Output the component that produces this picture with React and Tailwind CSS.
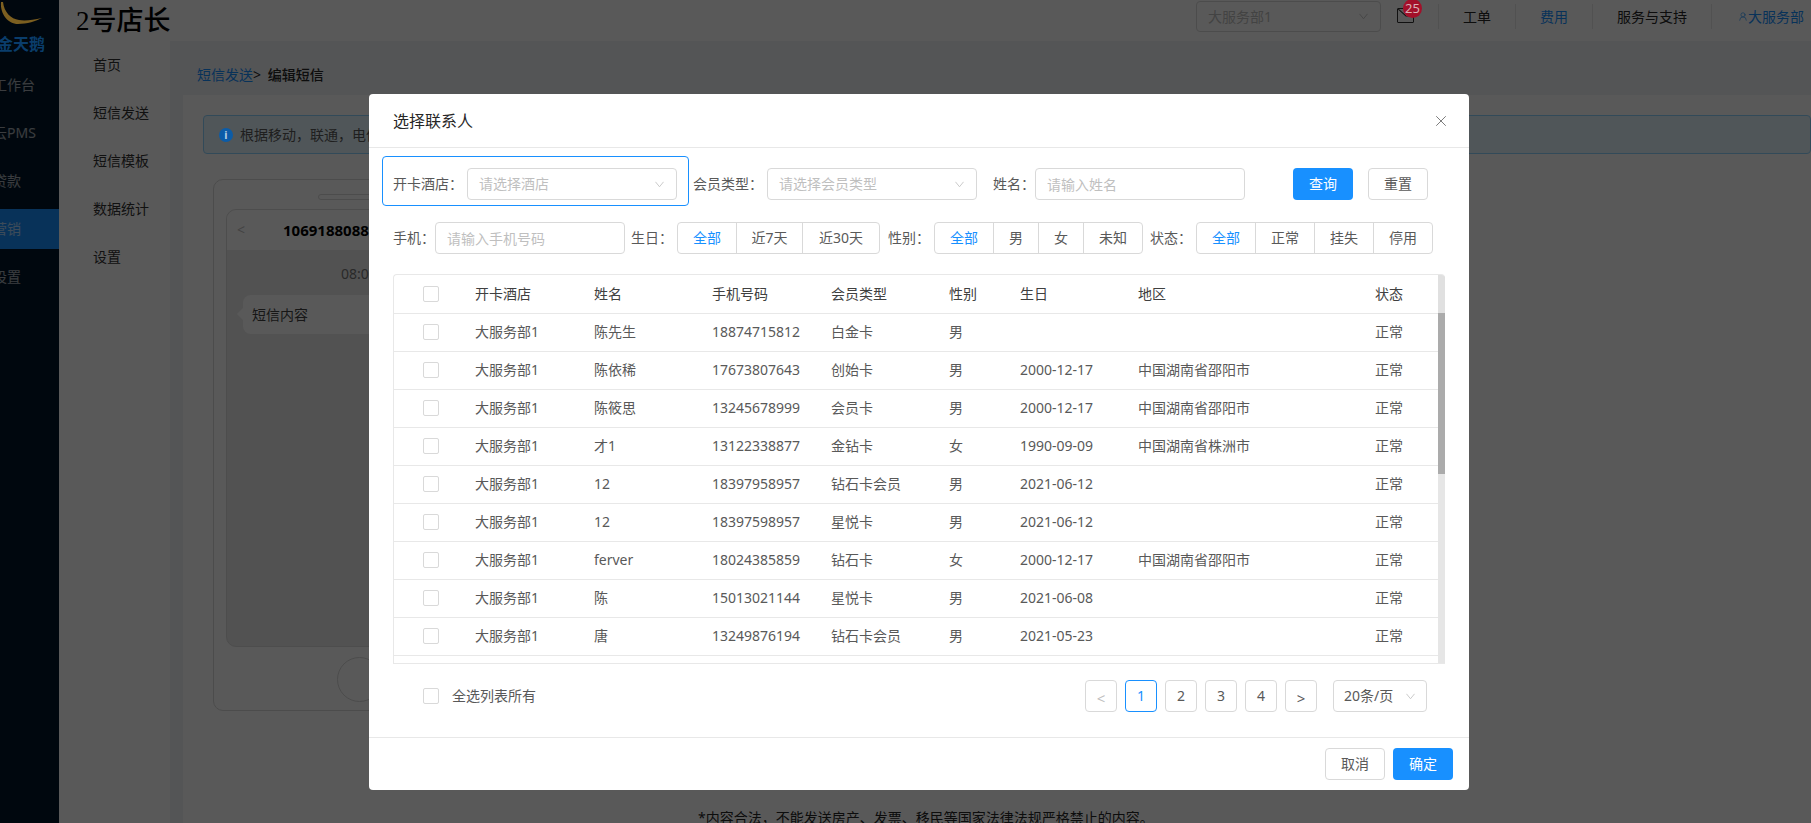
import React from "react";
import { X, UserRound } from "lucide-react";

const sideItems = ["工作台", "云PMS", "贷款", "营销", "设置"];
const subItems = ["首页", "短信发送", "短信模板", "数据统计", "设置"];

const rows = [
  ["大服务部1", "陈先生", "18874715812", "白金卡", "男", "", "", "正常"],
  ["大服务部1", "陈依稀", "17673807643", "创始卡", "男", "2000-12-17", "中国湖南省邵阳市", "正常"],
  ["大服务部1", "陈筱思", "13245678999", "会员卡", "男", "2000-12-17", "中国湖南省邵阳市", "正常"],
  ["大服务部1", "才1", "13122338877", "金钻卡", "女", "1990-09-09", "中国湖南省株洲市", "正常"],
  ["大服务部1", "12", "18397958957", "钻石卡会员", "男", "2021-06-12", "", "正常"],
  ["大服务部1", "12", "18397598957", "星悦卡", "男", "2021-06-12", "", "正常"],
  ["大服务部1", "ferver", "18024385859", "钻石卡", "女", "2000-12-17", "中国湖南省邵阳市", "正常"],
  ["大服务部1", "陈", "15013021144", "星悦卡", "男", "2021-06-08", "", "正常"],
  ["大服务部1", "唐", "13249876194", "钻石卡会员", "男", "2021-05-23", "", "正常"],
];

const Chevron = ({ className }) => (
  <svg viewBox="0 0 10 7" className={className} fill="none" stroke="currentColor" strokeWidth="0.9">
    <path d="M0.5 0.5 L5 6 L9.5 0.5" />
  </svg>
);

const Checkbox = () => (
  <div className="w-4 h-4 shrink-0 bg-white border border-[#d9d9d9] rounded-[2px]" />
);

const FakeSelect = ({ text, placeholder, className }) => (
  <div className={`h-8 flex items-center justify-between pl-[11px] pr-3 bg-white border border-[#d9d9d9] rounded ${className}`}>
    <span className={placeholder ? "text-[#bfbfbf]" : "text-[#595959]"}>{text}</span>
    <Chevron className="w-[9px] h-[7px] text-[#bfbfbf]" />
  </div>
);

const TextInput = ({ placeholder, className }) => (
  <input
    readOnly
    placeholder={placeholder}
    className={`h-8 pl-[11px] pr-3 bg-white border border-[#d9d9d9] rounded outline-none placeholder:text-[#bfbfbf] ${className}`}
  />
);

const RadioGroup = ({ items }) => (
  <div className="flex h-8">
    {items.map(([label, width], i) => (
      <div
        key={label}
        style={{ width }}
        className={`flex items-center justify-center border border-[#d9d9d9] -ml-px first:ml-0 first:rounded-l last:rounded-r ${
          i === 0 ? "relative z-10 border-[#1890ff] text-[#1890ff]" : "text-[#595959]"
        }`}
      >
        {label}
      </div>
    ))}
  </div>
);

const PageBtn = ({ children, active, className }) => (
  <div
    className={`w-8 h-8 flex items-center justify-center border rounded ${
      active ? "border-[#1890ff] text-[#1890ff]" : "border-[#d9d9d9] text-[#595959]"
    } ${className || ""}`}
  >
    {children}
  </div>
);

const FormLabel = ({ children, className }) => (
  <span className={`h-8 leading-8 shrink-0 ${className}`}>{children}</span>
);

const ContactModal = () => (
  <div className="w-[1100px] h-[696px] bg-white rounded flex flex-col text-sm leading-[22px] text-[#595959]">
    <div className="h-[54px] shrink-0 flex items-center justify-between pl-6 pr-[19px] border-b border-[#e8e8e8]">
      <span className="text-base text-[#262626]">选择联系人</span>
      <X className="w-[18px] h-[18px] text-[#737373]" strokeWidth={1.25} />
    </div>

    {/* filters */}
    <div className="flex items-start mt-2 ml-[13px]">
      <div className="w-[307px] h-[50px] flex items-start pt-[11px] pl-[10px] border border-[#1890ff] rounded">
        <FormLabel className="w-[74px]">开卡酒店：</FormLabel>
        <FakeSelect text="请选择酒店" placeholder className="w-[210px]" />
      </div>
      <div className="flex items-center mt-3">
        <FormLabel className="w-[74px] ml-1">会员类型：</FormLabel>
        <FakeSelect text="请选择会员类型" placeholder className="w-[210px]" />
        <FormLabel className="w-[42px] ml-4">姓名：</FormLabel>
        <TextInput placeholder="请输入姓名" className="w-[210px]" />
        <div className="w-[60px] h-8 ml-[48px] flex items-center justify-center rounded bg-[#1890ff] text-white">查询</div>
        <div className="w-[60px] h-8 ml-[15px] flex items-center justify-center rounded border border-[#d9d9d9]">重置</div>
      </div>
    </div>
    <div className="flex items-center mt-4 ml-6">
      <FormLabel className="w-[42px]">手机：</FormLabel>
      <TextInput placeholder="请输入手机号码" className="w-[190px]" />
      <FormLabel className="w-[46px] ml-[6px]">生日：</FormLabel>
      <RadioGroup items={[["全部", 60], ["近7天", 67], ["近30天", 78]]} />
      <FormLabel className="w-[46px] ml-2">性别：</FormLabel>
      <RadioGroup items={[["全部", 60], ["男", 46], ["女", 46], ["未知", 60]]} />
      <FormLabel className="w-[46px] ml-[7px]">状态：</FormLabel>
      <RadioGroup items={[["全部", 60], ["正常", 60], ["挂失", 60], ["停用", 60]]} />
    </div>

    {/* table */}
    <div className="flex w-[1052px] h-[390px] mt-5 ml-6 border-t border-b border-l border-[#e8e8e8] rounded-t overflow-hidden">
      <table className="w-[1044px] h-fit table-fixed border-collapse shrink-0">
        <colgroup>
          <col className="w-[81px]" />
          <col className="w-[119px]" />
          <col className="w-[118px]" />
          <col className="w-[119px]" />
          <col className="w-[118px]" />
          <col className="w-[71px]" />
          <col className="w-[118px]" />
          <col className="w-[237px]" />
          <col className="w-[63px]" />
        </colgroup>
        <thead>
          <tr className="h-[38px] border-b border-[#e8e8e8] text-[#404040]">
            <th className="pl-[29px] font-normal"><Checkbox /></th>
            {["开卡酒店", "姓名", "手机号码", "会员类型", "性别", "生日", "地区", "状态"].map((h) => (
              <th key={h} className="text-left font-normal">{h}</th>
            ))}
          </tr>
        </thead>
        <tbody>
          {rows.map((r) => (
            <tr key={r[2]} className="h-[38px] border-b border-[#e8e8e8]">
              <td className="pl-[29px]"><Checkbox /></td>
              {r.map((c, i) => (
                <td key={i}>{c}</td>
              ))}
            </tr>
          ))}
        </tbody>
      </table>
      <div className="w-[7px] bg-[#e6e6e6]">
        <div className="w-full h-[38px] bg-[#e0e0e0]" />
        <div className="w-full h-[161px] bg-[#ababab]" />
      </div>
    </div>

    {/* select-all + pagination */}
    <div className="flex items-center mt-4 ml-[54px] mr-[42px]">
      <Checkbox />
      <span className="ml-[13px]">全选列表所有</span>
      <div className="ml-auto flex items-center gap-2">
        <PageBtn className="pt-1 text-[15px] !text-[#bfbfbf]">&lt;</PageBtn>
        <PageBtn active>1</PageBtn>
        <PageBtn>2</PageBtn>
        <PageBtn>3</PageBtn>
        <PageBtn>4</PageBtn>
        <PageBtn className="pt-1 text-[15px]">&gt;</PageBtn>
        <FakeSelect text="20条/页" className="w-[94px] ml-2 !pl-[10px] !pr-[11px]" />
      </div>
    </div>

    {/* footer */}
    <div className="flex justify-end gap-2 h-[53px] mt-[25px] pt-[10px] pr-4 border-t border-[#e8e8e8]">
      <div className="w-[60px] h-8 flex items-center justify-center rounded border border-[#d9d9d9]">取消</div>
      <div className="w-[60px] h-8 flex items-center justify-center rounded bg-[#1890ff] text-white">确定</div>
    </div>
  </div>
);

const PhonePreview = () => (
  <div className="w-[292px] h-[532px] ml-[10px] mt-[25px] border border-[#d9d9d9] rounded-[10px] flex flex-col items-center">
    <div className="w-[82px] h-[6px] mt-[14px] border border-[#d9d9d9] rounded-full" />
    <div className="w-[266px] h-[438px] mt-[9px] rounded-[10px] border border-[#dcdcdc] bg-[#ebebeb] overflow-hidden">
      <div className="h-[40px] flex items-center bg-white pl-[10px]">
        <span className="text-[#bfbfbf]">&lt;</span>
        <span className="ml-[38px] font-bold text-black text-[15px]">10691880889</span>
      </div>
      <div className="mt-[13px] text-center text-[#777]">08:00</div>
      <div className="relative mt-[10px] ml-4 w-[200px] h-[39px] pl-[9px] flex items-center bg-white rounded-lg text-[#444]">
        <span className="absolute -left-[6px] top-[13px] w-0 h-0 border-y-[6px] border-y-transparent border-r-[6px] border-r-white" />
        短信内容
      </div>
    </div>
    <div className="w-[45px] h-[45px] mt-[10px] border border-[#d9d9d9] rounded-full" />
  </div>
);

export default function App() {
  return (
    <div className="relative w-[1811px] h-[823px] flex overflow-hidden bg-[#f0f2f5] text-sm leading-[22px] font-['Noto_Sans','Noto_Sans_CJK_SC',sans-serif]">
      {/* dark sidebar */}
      <aside className="w-[59px] shrink-0 bg-[#001529] text-white/65 overflow-hidden">
        <div className="relative z-20 h-[65px]">
          <svg viewBox="0 0 59 36" className="w-[59px] h-9 block">
            <path d="M1 2 C0 14 8 24 18 24 C27 24 36 21 42 18 C33 20 25 21 19 20 C11 19 4 12 3 2 Z" fill="#7c5f20" />
          </svg>
          <div className="-ml-[3px] -mt-[1px] whitespace-nowrap text-base leading-[18px] font-bold text-[#0a3d6b]">金天鹅</div>
        </div>
        {sideItems.map((t, i) => (
          <div
            key={t}
            className={`h-10 mb-2 flex items-center -ml-[7px] whitespace-nowrap ${i === 3 ? "ml-0 pl-0 bg-[#1890ff]" : ""}`}
          >
            <span className={i === 3 ? "-ml-[7px]" : ""}>{t}</span>
          </div>
        ))}
      </aside>

      <div className="flex-1 flex flex-col min-w-0">
        {/* top bar */}
        <header className="h-[41px] shrink-0 bg-white flex items-start">
          <div className="ml-[17px] mt-[6px] whitespace-nowrap text-[27px] leading-[28px] text-black font-medium">
            <span className="font-['Liberation_Serif',serif]">2</span>号店长
          </div>
          <div className="ml-auto mr-[7px] h-[33px] flex items-center text-[#595959]">
            <FakeSelect text="大服务部1" placeholder className="w-[185px] !h-[31px]" />
            <div className="relative ml-4 w-[17px] h-[15px] -mt-[3px] border border-[#333] rounded-[1px]">
              <svg viewBox="0 0 17 15" className="w-full h-full" fill="none" stroke="#333" strokeWidth="1.2">
                <path d="M0 0 L9 8 L16 8" />
              </svg>
              <span className="absolute z-20 -right-[9px] -top-[10px] w-[19px] h-[19px] rounded-full bg-[#a3102a] text-[#d8b0b5] text-[13px] leading-[19px] text-center">25</span>
            </div>
            <div className="ml-6 mr-6 w-px h-[25px] bg-[#e8e8e8]" />
            <span className="text-[#262626]">工单</span>
            <div className="mx-6 w-px h-[25px] bg-[#e8e8e8]" />
            <span className="text-[#1890ff]">费用</span>
            <div className="mx-6 w-px h-[25px] bg-[#e8e8e8]" />
            <span className="text-[#262626]">服务与支持</span>
            <div className="ml-6 mr-[26px] w-px h-[25px] bg-[#e8e8e8]" />
            <UserRound className="w-[10px] h-[11px] text-[#1890ff]" strokeWidth={1.5} />
            <span className="text-[#1890ff] whitespace-nowrap">大服务部</span>
          </div>
        </header>

        <div className="flex-1 flex min-h-0">
          {/* sub menu */}
          <nav className="w-[111px] shrink-0 bg-white pl-[34px] text-[#333]">
            {subItems.map((t) => (
              <div key={t} className="h-12 flex items-center">{t}</div>
            ))}
          </nav>
          <main className="flex-1 min-w-0 overflow-hidden">
            <div className="h-[54px] pl-[27px] pt-[23px] whitespace-nowrap">
              <span className="text-[#1890ff]">短信发送</span>
              <span className="text-[#262626]">&gt; </span>
              <span className="ml-[3px] text-[#262626] font-medium">编辑短信</span>
            </div>
            <div className="ml-[13px] h-full bg-white pt-5 pl-5">
              <div className="h-[39px] flex items-center pl-[15px] bg-[#e6f7ff] border border-[#91d5ff] rounded text-[#595959]">
                <span className="relative z-20 w-[14px] h-[14px] rounded-full bg-[#0b5ca8] text-white/70 text-[11px] leading-[14px] text-center font-bold">i</span>
                <span className="ml-[7px]">根据移动，联通，电信运营商的相关规定</span>
              </div>
              <PhonePreview />
              <p className="ml-[495px] mt-[96px] whitespace-nowrap text-[#262626]">*内容合法，不能发送房产、发票、移民等国家法律法规严格禁止的内容。</p>
            </div>
          </main>
        </div>
      </div>

      {/* mask + dialog */}
      <div className="absolute inset-0 z-10 bg-black/65 pl-[369px] pt-[94px]">
        <ContactModal />
      </div>
    </div>
  );
}
